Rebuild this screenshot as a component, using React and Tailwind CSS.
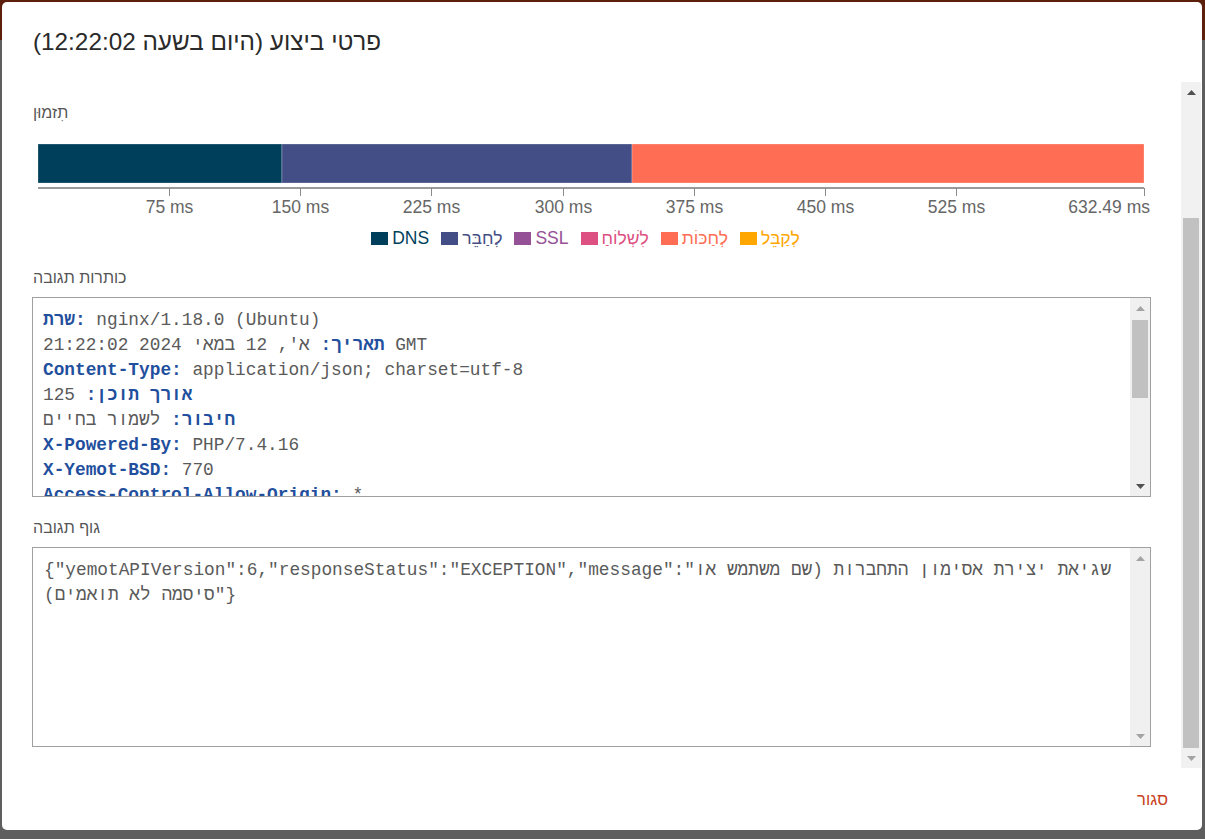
import React from "react";

const AXIS_MAX = 632.49;
const X0 = 6;
const X1 = 1112;
const PX = (X1 - X0) / AXIS_MAX;

const segments = [
  { from: 0, to: 139.5, color: "#003f5c" },
  { from: 139.5, to: 339.7, color: "#444e86" },
  { from: 339.7, to: AXIS_MAX, color: "#ff6e54" },
];

const ticks = [75, 150, 225, 300, 375, 450, 525];

const legend = [
  { label: "DNS", color: "#003f5c" },
  { label: "לְחַבֵּר", color: "#444e86" },
  { label: "SSL", color: "#955196" },
  { label: "לִשְׁלוֹחַ", color: "#dd5182" },
  { label: "לְחַכּוֹת", color: "#ff6e54" },
  { label: "לְקַבֵּל", color: "#ffa600" },
];

function Arrow({ up, color }) {
  return (
    <svg width="9" height="5" viewBox="0 0 9 5">
      <polygon points={up ? "0,5 4.5,0 9,5" : "0,0 9,0 4.5,5"} fill={color} />
    </svg>
  );
}

function Timeline() {
  return (
    <svg width="1119" height="88" className="block" fontFamily="'Liberation Sans', Arial, sans-serif">
      {segments.map((s) => (
        <rect
          key={s.color}
          x={X0 + s.from * PX}
          y={14}
          width={(s.to - s.from) * PX}
          height={39}
          fill={s.color}
          stroke="rgba(255,255,255,0.25)"
          strokeWidth="1"
        />
      ))}
      <line x1={X0} x2={X1} y1={58} y2={58} stroke="#9a9a9a" strokeWidth="2" />
      {ticks.map((t) => {
        const x = Math.round(X0 + t * PX) + 0.5;
        return (
          <g key={t}>
            <line x1={x} x2={x} y1={58} y2={66} stroke="#8a8a8a" strokeWidth="1" />
            <text x={x} y={83} textAnchor="middle" fontSize="17.5" fill="#666">
              {t} ms
            </text>
          </g>
        );
      })}
      <line x1={X1 + 0.5} x2={X1 + 0.5} y1={58} y2={66} stroke="#8a8a8a" strokeWidth="1" />
      <text x={1118} y={83} textAnchor="end" fontSize="17.5" fill="#666">
        632.49 ms
      </text>
    </svg>
  );
}

function Legend() {
  return (
    <div className="flex h-[18px] items-center justify-center text-[17.5px] leading-[18px]">
      {legend.map((l) => (
        <div key={l.label} className="mr-[12px] flex items-center gap-[4px]">
          <span className="inline-block h-[13px] w-[17px]" style={{ background: l.color }} />
          <span style={{ color: l.color }}>{l.label}</span>
        </div>
      ))}
    </div>
  );
}

function BoxScrollbar({ thumb }) {
  return (
    <div className="flex w-[20px] flex-col bg-[#f0f0f0]">
      <div className="flex h-[20px] items-center justify-center">
        <Arrow up color="#a3a3a3" />
      </div>
      <div className="flex-1 pt-[2px]">
        {thumb && <div className="mx-[2px] h-[78px] bg-[#c1c1c1]" />}
      </div>
      <div className="flex h-[20px] items-center justify-center">
        <Arrow color={thumb ? "#505050" : "#a3a3a3"} />
      </div>
    </div>
  );
}

function Key({ children }) {
  return <b className="font-bold text-[#1f4f9d]">{children}</b>;
}

export default function App() {
  return (
    <div className="relative h-[839px] w-full overflow-hidden bg-[#5e5e5e] font-['Liberation_Sans',Arial,sans-serif]">
      <div className="h-[40px] bg-[#5b1f0c]" />

      <div className="absolute bottom-[9px] left-[2px] right-[3px] top-[2px] flex flex-col rounded-[5px] bg-white">
        <div className="flex h-[80px] shrink-0 items-center pl-[31px] text-[24.3px] text-[#2a2a2a]">
          פרטי ביצוע (היום בשעה 12:22:02)
        </div>

        <div className="flex min-h-0 flex-1">
          <div className="flex min-w-0 flex-1 flex-col overflow-hidden px-[30px] pt-[22px]">
            <div className="pl-[1px] text-[16px] leading-[18px] text-[#555]">תִזמוּן</div>
            <div className="mt-[8px]">
              <Timeline />
            </div>
            <div className="mt-[11px]">
              <Legend />
            </div>

            <div className="mt-[22px] pl-[1px] text-[16px] leading-[18px] text-[#555]">כותרות תגובה</div>
            <div className="mt-[10px] flex h-[200px] shrink-0 border border-[#a0a0a0]">
              <div className="min-w-0 flex-1 overflow-hidden whitespace-nowrap px-[10px] pt-[10px] font-['Liberation_Mono','Courier_New',monospace] text-[17.8px] leading-[25px] text-[#5a5a5a]">
                <div><Key>שרת:</Key> nginx/1.18.0 (Ubuntu)</div>
                <div><Key>תאריך:</Key> א', 12 במאי 2024 21:22:02 GMT</div>
                <div><Key>Content-Type:</Key> application/json; charset=utf-8</div>
                <div><Key>אורך תוכן:</Key> 125</div>
                <div><Key>חיבור:</Key> לשמור בחיים</div>
                <div><Key>X-Powered-By:</Key> PHP/7.4.16</div>
                <div><Key>X-Yemot-BSD:</Key> 770</div>
                <div><Key>Access-Control-Allow-Origin:</Key> *</div>
              </div>
              <BoxScrollbar thumb />
            </div>

            <div className="mt-[22px] pl-[1px] text-[16px] leading-[18px] text-[#555]">גוף תגובה</div>
            <div className="mt-[10px] flex h-[200px] shrink-0 border border-[#a0a0a0]">
              <div className="min-w-0 flex-1 overflow-hidden pl-[11px] pr-[2px] pt-[10px] font-['Liberation_Mono','Courier_New',monospace] text-[17.8px] leading-[25px] text-[#5a5a5a]">
                {'{"yemotAPIVersion":6,"responseStatus":"EXCEPTION","message":"שגיאת יצירת אסימון התחברות (שם משתמש או סיסמה לא תואמים)"}'}
              </div>
              <BoxScrollbar />
            </div>
          </div>

          <div className="flex w-[20px] shrink-0 flex-col bg-[#f1f1f1]">
            <div className="flex h-[20px] items-center justify-center">
              <Arrow up color="#505050" />
            </div>
            <div className="flex-1 pt-[116px]">
              <div className="mx-[2px] h-[530px] bg-[#c1c1c1]" />
            </div>
            <div className="flex h-[20px] items-center justify-center">
              <Arrow color="#a3a3a3" />
            </div>
          </div>
          <div className="w-[1px] shrink-0" />
        </div>

        <div className="flex h-[62px] shrink-0 items-center justify-end pr-[34px] text-[16.5px] font-medium text-[#c8421d]">
          סגור
        </div>
      </div>
    </div>
  );
}
